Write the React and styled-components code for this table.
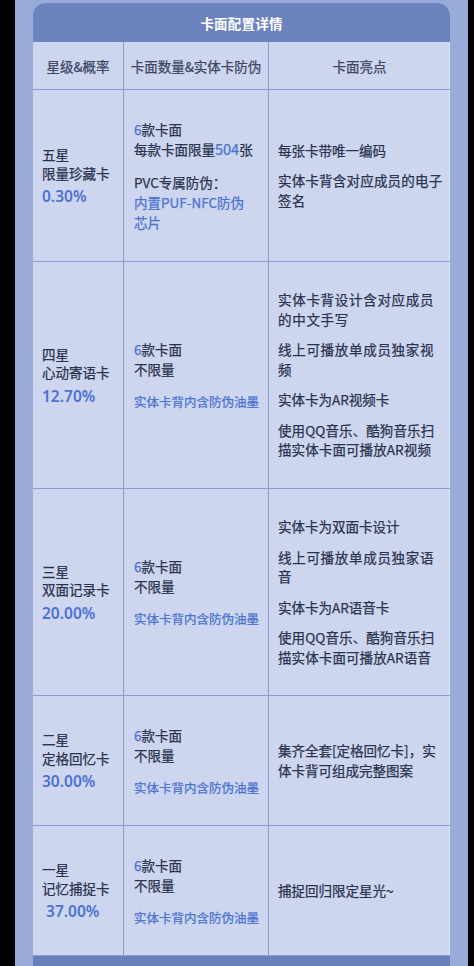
import React from 'react';
import styled, { createGlobalStyle } from 'styled-components';

const Global = createGlobalStyle`
  html, body { margin: 0; padding: 0; background: #000; }
  body { font-family: "Noto Sans CJK SC", "Noto Sans", sans-serif; }
`;

const Page = styled.div`
  width: 474px;
  height: 966px;
  overflow: hidden;
  background: #000;
  padding-left: 15px;
  box-sizing: border-box;
`;

const Frame = styled.div`
  width: 453px;
  min-height: 966px;
  box-sizing: border-box;
  background: #98abd9;
  padding: 3px 18px 0;
`;

const Table = styled.div`
  width: 417px;
  border-radius: 12px 12px 0 0;
  overflow: hidden;
  background: #cdd6ee;
  box-shadow: inset -1px 0 0 #dbe2f6;
`;

const Title = styled.div`
  height: 39px;
  background: #6c83bf;
  color: #fff;
  font-size: 13.5px;
  font-weight: 700;
  display: flex;
  align-items: center;
  justify-content: center;
  letter-spacing: 0.2px;
`;

const Row = styled.div`
  display: grid;
  grid-template-columns: 90px 145px 182px;
  height: ${p => p.$h}px;
  box-sizing: border-box;
  border-bottom: 1px solid #8d9ccd;
`;

const HeadCell = styled.div`
  display: flex;
  align-items: center;
  justify-content: center;
  color: #3d4464;
  font-size: 13.5px;
  font-weight: 400;
  -webkit-text-stroke: 0.25px currentColor;
  border-left: ${p => (p.$first ? 'none' : '1px solid #8d9ccd')};
`;

const Cell = styled.div`
  display: flex;
  flex-direction: column;
  justify-content: center;
  padding: ${p => `0 6px 0 ${p.$pl}px`};
  box-sizing: border-box;
  color: #2b3250;
  font-size: 13.5px;
  font-weight: 400;
  line-height: 19px;
  -webkit-text-stroke: 0.25px currentColor;
  border-left: ${p => (p.$first ? 'none' : '1px solid #8d9ccd')};
`;

const Name = styled.div`
  line-height: 18.5px;
`;

const Rate = styled.div`
  margin-top: 4px;
  color: #4b72d1;
  font-size: 15.5px;
  font-weight: 600;
  line-height: 20px;
  -webkit-text-stroke: 0;
  font-family: "Noto Sans", "Noto Sans CJK SC", sans-serif;
`;

const Line = styled.div`
  line-height: 20px;
  margin-top: ${p => p.$gap || 0}px;
`;

const Blue = styled.span`
  color: #4b72d1;
  font-size: ${p => p.$size || 13.5}px;
`;

const Note = styled.div`
  margin-top: 13px;
  color: #4b72d1;
  font-size: 12.5px;
  line-height: 19px;
`;

const Para = styled.p`
  margin: ${p => (p.$first ? 0 : 11)}px 0 0;
  line-height: 19.5px;
  letter-spacing: ${p => p.$ls || 0}px;
`;

const Footer = styled.div`
  height: 20px;
  background: #6a80bb;
`;

const rows = [
  {
    h: 172,
    star: '五星',
    name: '限量珍藏卡',
    rate: '0.30%',
    qty: (
      <>
        <Line><Blue>6</Blue>款卡面</Line>
        <Line>每款卡面限量<Blue $size={14.5}>504</Blue>张</Line>
        <Line $gap={13}>PVC专属防伪：</Line>
        <Line><Blue>内置PUF-NFC防伪<br />芯片</Blue></Line>
      </>
    ),
    points: [
      { t: '每张卡带唯一编码' },
      { t: '实体卡背含对应成员的电子签名', ls: 0.2 },
    ],
  },
  {
    h: 227,
    star: '四星',
    name: '心动寄语卡',
    rate: '12.70%',
    points: [
      { t: <>实体卡背设计含对应成员<br />的中文手写</>, ls: 0.7 },
      { t: <>线上可播放单成员独家视<br />频</>, ls: 0.7 },
      { t: '实体卡为AR视频卡' },
      { t: <>使用QQ音乐、酷狗音乐扫<br />描实体卡面可播放AR视频</>, ls: 0.1 },
    ],
  },
  {
    h: 207,
    star: '三星',
    name: '双面记录卡',
    rate: '20.00%',
    points: [
      { t: '实体卡为双面卡设计' },
      { t: <>线上可播放单成员独家语<br />音</>, ls: 0.7 },
      { t: '实体卡为AR语音卡' },
      { t: <>使用QQ音乐、酷狗音乐扫<br />描实体卡面可播放AR语音</>, ls: 0.1 },
    ],
  },
  {
    h: 130,
    star: '二星',
    name: '定格回忆卡',
    rate: '30.00%',
    points: [{ t: <>集齐全套[定格回忆卡]，实<br />体卡背可组成完整图案</> }],
  },
  {
    h: 130,
    star: '一星',
    name: '记忆捕捉卡',
    rate: '\u00a037.00%',
    points: [{ t: '捕捉回归限定星光~' }],
  },
];

const Unlimited = () => (
  <>
    <Line><Blue>6</Blue>款卡面</Line>
    <Line>不限量</Line>
    <Note>实体卡背内含防伪油墨</Note>
  </>
);

export default function App() {
  return (
    <Page>
      <Global />
      <Frame>
        <Table>
          <Title>卡面配置详情</Title>
          <Row $h={48}>
            <HeadCell $first>星级&amp;概率</HeadCell>
            <HeadCell>卡面数量&amp;实体卡防伪</HeadCell>
            <HeadCell>卡面亮点</HeadCell>
          </Row>
          {rows.map((r, i) => (
            <Row key={i} $h={r.h}>
              <Cell $first $pl={9}>
                <Name>{r.star}</Name>
                <Name>{r.name}</Name>
                <Rate>{r.rate}</Rate>
              </Cell>
              <Cell $pl={10}>{r.qty || <Unlimited />}</Cell>
              <Cell $pl={9}>
                {r.points.map((p, j) => (
                  <Para key={j} $first={j === 0} $ls={p.ls}>{p.t}</Para>
                ))}
              </Cell>
            </Row>
          ))}
          <Footer />
        </Table>
      </Frame>
    </Page>
  );
}
